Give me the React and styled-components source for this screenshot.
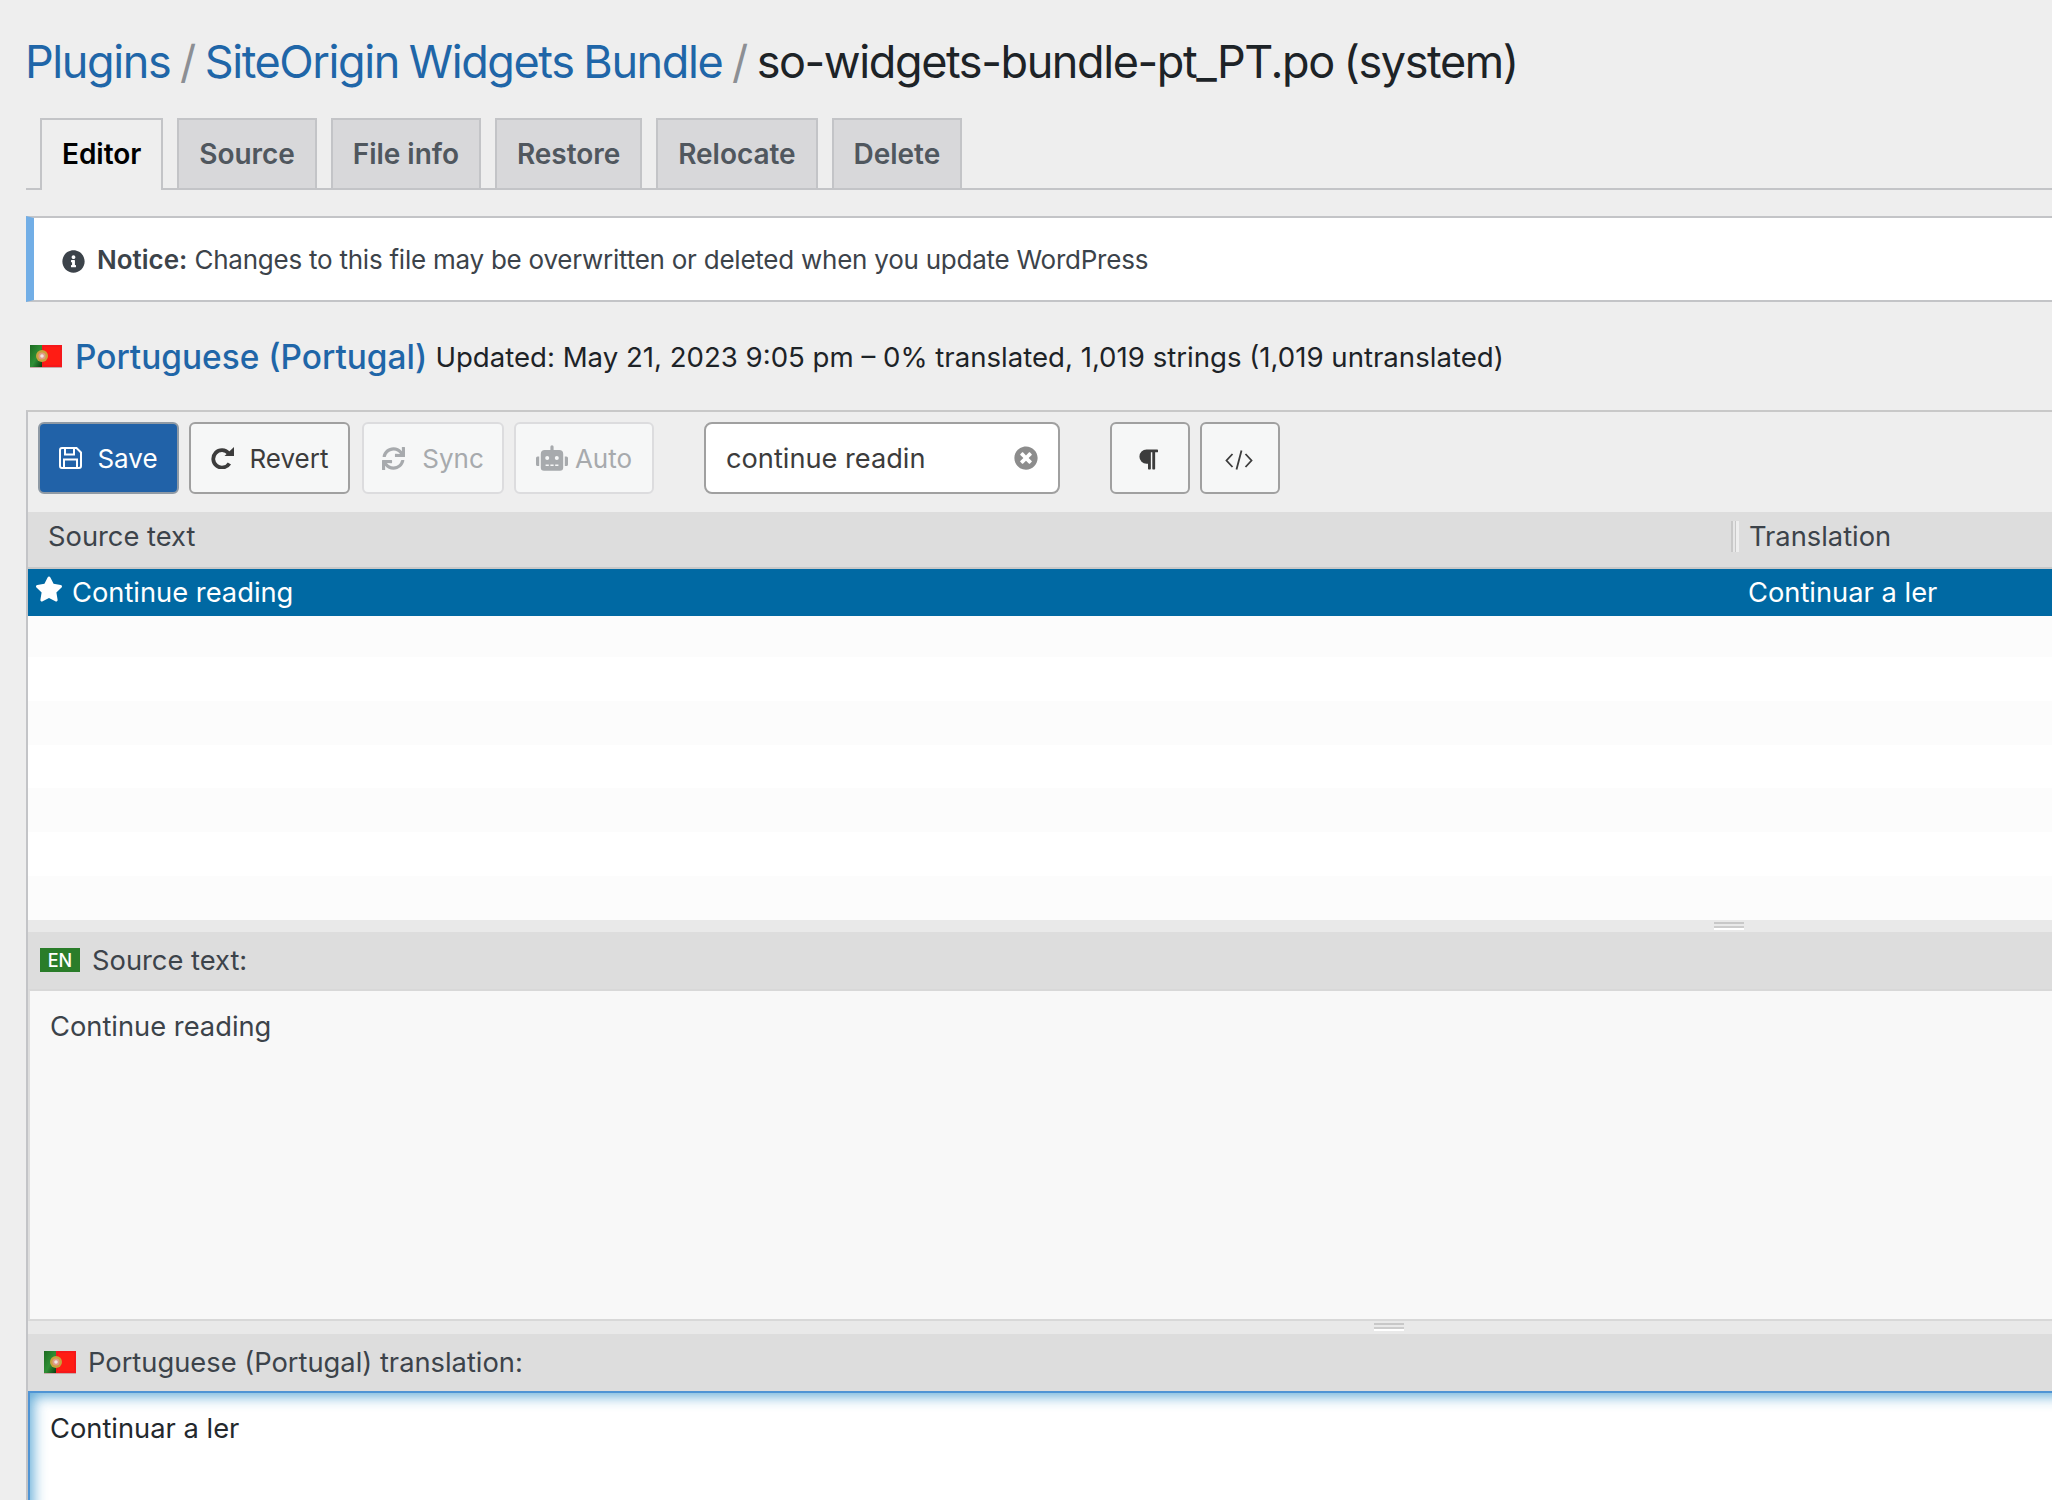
import React from 'react';
import styled, { createGlobalStyle } from 'styled-components';
import { FaInfoCircle, FaSync, FaRobot, FaTimesCircle, FaParagraph, FaStar } from 'react-icons/fa';

const GlobalStyle = createGlobalStyle`
  html, body {
    margin: 0;
    padding: 0;
    background: #eeeeee;
    font-family: Inter, "Noto Sans", "Liberation Sans", sans-serif;
    color: #3c434a;
  }
`;

const Page = styled.div`
  box-sizing: border-box;
  width: 2052px;
  height: 1500px;
  padding-left: 26px;
  overflow: hidden;
`;

const Title = styled.h1`
  margin: 0 0 0 -1px;
  padding-top: 30px;
  height: 88px;
  font-size: 45px;
  line-height: 64px;
  font-weight: 400;
  letter-spacing: -1.4px;
  word-spacing: -1.5px;
  color: #1d2327;
  white-space: nowrap;
`;

const TitleLink = styled.a`
  color: #1f66a8;
`;

const Slash = styled.span`
  color: #8c8f94;
`;

const TabBar = styled.nav`
  display: flex;
  gap: 14px;
  height: 70px;
  padding-left: 14px;
  border-bottom: 2px solid #c3c4c7;
`;

const Tab = styled.a`
  box-sizing: border-box;
  display: flex;
  align-items: center;
  height: 72px;
  padding: 0 20px ${({ $active }) => ($active ? '2px' : '0')};
  border: 2px solid #c3c4c7;
  border-bottom: ${({ $active }) => ($active ? '0' : '2px solid #c3c4c7')};
  background: ${({ $active }) => ($active ? '#eeeeee' : '#d8d8da')};
  color: ${({ $active }) => ($active ? '#000000' : '#50575e')};
  font-size: 28px;
  font-weight: 600;
  letter-spacing: -0.04px;
`;

const Notice = styled.div`
  box-sizing: border-box;
  display: flex;
  align-items: center;
  gap: 12px;
  height: 86px;
  margin-top: 26px;
  padding-left: 28px;
  background: #ffffff;
  border-top: 2px solid #c3c4c7;
  border-bottom: 2px solid #c3c4c7;
  border-left: 8px solid #72aee6;
  font-size: 26px;
  letter-spacing: -0.24px;
  color: #3c434a;
  svg {
    width: 23px;
    height: 23px;
    margin-top: 4px;
  }
  b {
    font-weight: 600;
    letter-spacing: 0;
  }
`;

const LangRow = styled.div`
  display: flex;
  align-items: center;
  height: 108px;
  padding-left: 4px;
  white-space: nowrap;
`;

const LangLink = styled.a`
  margin: 2px 0 0 13px;
  font-size: 33.4px;
  font-weight: 500;
  color: #1f66a8;
`;

const LangMeta = styled.span`
  margin: 2px 0 0 8px;
  font-size: 27.6px;
  color: #1d2327;
`;

const Editor = styled.div`
  width: 2200px;
  border-top: 2px solid #c8c8c8;
  border-left: 2px solid #c3c4c7;
`;

const Toolbar = styled.div`
  display: flex;
  align-items: center;
  gap: 10px;
  height: 100px;
  padding: 0 0 8px 10px;
  box-sizing: border-box;
`;

const Button = styled.button`
  box-sizing: border-box;
  display: flex;
  align-items: center;
  justify-content: center;
  gap: ${({ $gap }) => $gap || 14}px;
  width: ${({ $w }) => $w}px;
  height: 72px;
  padding: 0;
  margin-left: ${({ $ml }) => $ml || 0}px;
  border-radius: 6px;
  border: 2px solid ${({ $primary, disabled }) => ($primary ? '#8f9aa5' : disabled ? '#dcdcde' : '#a0a0a0')};
  background: ${({ $primary }) => ($primary ? '#2162a8' : '#f6f7f7')};
  color: ${({ $primary, disabled }) => ($primary ? '#ffffff' : disabled ? '#a7aaad' : '#3c3c3c')};
  font-family: inherit;
  font-size: 26px;
`;

const Pilcrow = styled(FaParagraph)`
  width: 20px;
  height: 23px;
  margin: 3px 4px 0 0;
`;

const CodeSvg = styled.svg`
  margin: 3px 3px 0 0;
`;

const SearchBox = styled.div`
  box-sizing: border-box;
  display: flex;
  align-items: center;
  justify-content: space-between;
  width: 356px;
  height: 72px;
  margin-left: 40px;
  padding: 0 20px 0 20px;
  background: #ffffff;
  border: 2px solid #a0a0a0;
  border-radius: 8px;
  font-size: 27.2px;
  color: #3c3c3c;
  svg {
    width: 24px;
    height: 24px;
    color: #8c8c8c;
  }
`;

const ColumnHead = styled.div`
  box-sizing: border-box;
  display: grid;
  grid-template-columns: 1703px 1fr;
  align-items: center;
  height: 57px;
  padding-bottom: 6px;
  background: #dddddd;
  border-bottom: 2px solid #c8c8c8;
  font-size: 27.3px;
  color: #3c434a;
`;

const SourceHead = styled.div`
  padding-left: 20px;
`;

const TargetHead = styled.div`
  display: flex;
  align-items: center;
  gap: 10px;
`;

const ColumnGrip = styled.span`
  width: 8px;
  height: 31px;
  background: linear-gradient(90deg, #c8c8c8 0 2px, #e6e6e6 2px 4px, #c8c8c8 4px 5px, #eeeeee 5px 8px);
`;

const SelectedRow = styled.div`
  display: grid;
  grid-template-columns: 1720px 1fr;
  align-items: center;
  height: 47px;
  background: #0069a3;
  color: #ffffff;
  font-size: 27.3px;
`;

const SourceCell = styled.div`
  display: flex;
  align-items: center;
  gap: 9px;
  padding-left: 7px;
  svg {
    width: 28px;
    height: 26px;
    margin-top: -7px;
  }
`;

const EmptyRow = styled.div`
  height: 43.83px;
  background: #ffffff;
  &:nth-child(odd) {
    background: #fcfcfc;
  }
  &:first-child {
    height: 41px;
  }
`;

const Splitter = styled.div`
  box-sizing: border-box;
  height: ${({ $h }) => $h}px;
  padding: 2px 0 0 ${({ $offset }) => $offset}px;
  background: #e9e9e9;
`;

const SplitHandle = styled.div`
  width: 30px;
  height: 8px;
  background: linear-gradient(#c8c8c8 0 2px, #e9e9e9 2px 4px, #cccccc 4px 6px, #ffffff 6px 8px);
`;

const PaneHead = styled.div`
  display: flex;
  align-items: center;
  gap: ${({ $gap }) => $gap}px;
  height: 57px;
  padding-left: ${({ $pad }) => $pad}px;
  background: #dddddd;
  font-size: 27.3px;
  color: #3c434a;
  white-space: nowrap;
`;

const LangBadge = styled.span`
  display: flex;
  align-items: center;
  justify-content: center;
  width: 40px;
  height: 24px;
  background: #2a7d2a;
  color: #ffffff;
  font-size: 18px;
  font-weight: 500;
`;

const SourcePane = styled.div`
  box-sizing: border-box;
  height: 332px;
  padding: 18px 0 0 20px;
  background: #f8f8f8;
  border-top: 2px solid #d8d8d8;
  border-bottom: 2px solid #d8d8d8;
  border-left: 2px solid #dddddd;
  font-size: 27.3px;
  line-height: 36px;
  color: #3c434a;
`;

const TargetPane = styled.div`
  box-sizing: border-box;
  height: 140px;
  padding: 18px 0 0 20px;
  background: #ffffff;
  border-top: 2px solid #4f94d4;
  border-left: 2px solid #4f94d4;
  box-shadow: inset 3px 3px 14px rgba(40, 140, 200, 0.75);
  font-size: 27.3px;
  line-height: 36px;
  color: #23282d;
`;

const FlagPt = () => (
  <svg width="32" height="23" viewBox="0 0 32 23">
    <defs>
      <linearGradient id="pt-left" x1="0" x2="1" y1="0" y2="1">
        <stop offset="0" stopColor="#1c6a20" />
        <stop offset="0.55" stopColor="#2f8f35" />
        <stop offset="1" stopColor="#0b3d10" />
      </linearGradient>
      <filter id="pt-soft">
        <feGaussianBlur stdDeviation="0.5" />
      </filter>
    </defs>
    <rect width="32" height="22" fill="#f5171a" />
    <rect x="14" y="2" width="16" height="18" fill="#ff1c14" />
    <rect width="12" height="22" fill="url(#pt-left)" />
    <g filter="url(#pt-soft)">
      <circle cx="12" cy="11" r="6" fill="#c9a23c" />
      <circle cx="12" cy="11" r="3.6" fill="#e29a86" />
      <circle cx="12" cy="11" r="1.8" fill="#f0e6e0" />
    </g>
    <rect y="22" width="32" height="1" fill="#c8a8a8" />
  </svg>
);

const SaveIcon = () => (
  <svg width="23" height="22" viewBox="0 0 23 22" fill="none" stroke="currentColor" strokeWidth="2">
    <path d="M3 1h14.5L22 5.5V19a2 2 0 0 1-2 2H3a2 2 0 0 1-2-2V3a2 2 0 0 1 2-2z" />
    <path d="M6 1v6.5h9V1M5 21v-8.5h13V21" />
  </svg>
);

const RevertIcon = () => (
  <svg width="23" height="22" viewBox="0 0 23 22" fill="none">
    <path d="M17.6 6.2A8.7 8.7 0 1 0 18.4 16.4" stroke="currentColor" strokeWidth="3.8" />
    <path d="M13.5 9H23V0z" fill="currentColor" />
  </svg>
);

const CodeIcon = () => (
  <CodeSvg width="28" height="22" viewBox="0 0 28 22" fill="none" stroke="currentColor" strokeWidth="1.8">
    <path d="M7.5 5L1.5 11.5l6 6.5M20.5 5l6 6.5-6 6.5M16.5 1.5l-5 19" />
  </CodeSvg>
);

export default function App() {
  return (
    <Page>
      <GlobalStyle />
      <Title>
        <TitleLink>Plugins</TitleLink> <Slash>/</Slash> <TitleLink>SiteOrigin Widgets Bundle</TitleLink>{' '}
        <Slash>/</Slash> so-widgets-bundle-pt_PT.po (system)
      </Title>
      <TabBar>
        <Tab $active>Editor</Tab>
        <Tab>Source</Tab>
        <Tab>File info</Tab>
        <Tab>Restore</Tab>
        <Tab>Relocate</Tab>
        <Tab>Delete</Tab>
      </TabBar>
      <Notice>
        <FaInfoCircle />
        <span>
          <b>Notice:</b> Changes to this file may be overwritten or deleted when you update WordPress
        </span>
      </Notice>
      <LangRow>
        <FlagPt />
        <LangLink>Portuguese (Portugal)</LangLink>
        <LangMeta>Updated: May 21, 2023 9:05 pm – 0% translated, 1,019 strings (1,019 untranslated)</LangMeta>
      </LangRow>
      <Editor>
        <Toolbar>
          <Button $primary $w={141} $gap={15}><SaveIcon />Save</Button>
          <Button $w={161} $gap={16}><RevertIcon />Revert</Button>
          <Button disabled $w={142} $ml={2} $gap={17}><FaSync size={23} />Sync</Button>
          <Button disabled $w={140} $gap={7}><FaRobot size={32} />Auto</Button>
          <SearchBox>continue readin<FaTimesCircle /></SearchBox>
          <Button $w={80} $ml={40}><Pilcrow /></Button>
          <Button $w={80}><CodeIcon /></Button>
        </Toolbar>
        <ColumnHead>
          <SourceHead>Source text</SourceHead>
          <TargetHead><ColumnGrip />Translation</TargetHead>
        </ColumnHead>
        <SelectedRow>
          <SourceCell><FaStar />Continue reading</SourceCell>
          <div>Continuar a ler</div>
        </SelectedRow>
        <div>
          {[0, 1, 2, 3, 4, 5, 6].map((n) => <EmptyRow key={n} />)}
        </div>
        <Splitter $h={12} $offset={1686}><SplitHandle /></Splitter>
        <PaneHead $pad={12} $gap={12}><LangBadge>EN</LangBadge>Source text:</PaneHead>
        <SourcePane>Continue reading</SourcePane>
        <Splitter $h={13} $offset={1346}><SplitHandle /></Splitter>
        <PaneHead $pad={16} $gap={12}><FlagPt />Portuguese (Portugal) translation:</PaneHead>
        <TargetPane>Continuar a ler</TargetPane>
      </Editor>
    </Page>
  );
}
